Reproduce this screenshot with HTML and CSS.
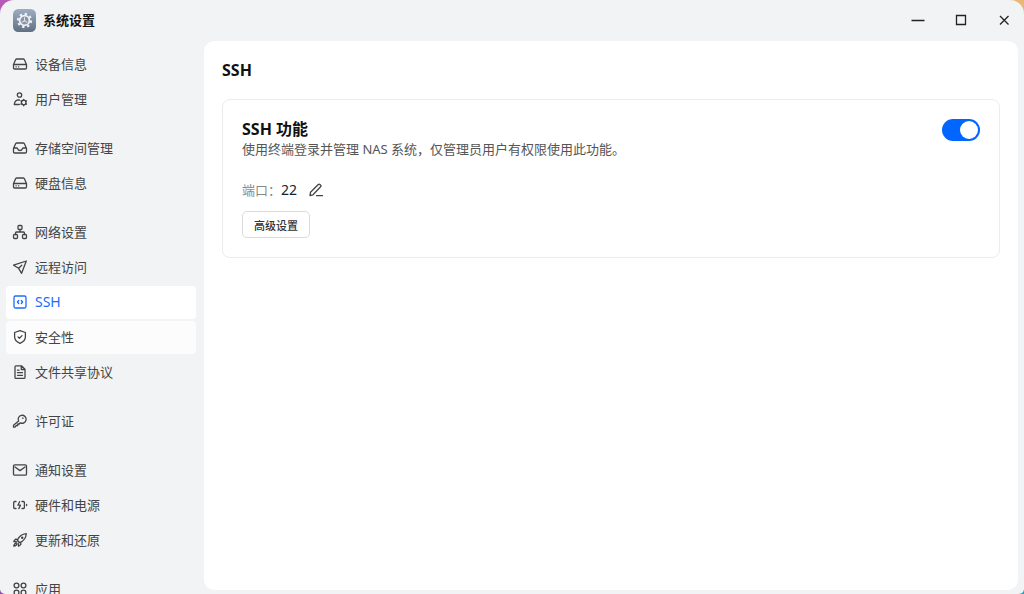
FILE: index.html
```html
<!DOCTYPE html>
<html lang="zh-CN">
<head>
<meta charset="utf-8">
<meta name="viewport" content="width=device-width, initial-scale=1">
<title>系统设置</title>
<link rel="stylesheet" href="styles.css">
</head>
<body>
<div class="window">
  <header class="titlebar">
    <svg class="app-icon" viewBox="0 0 22 22" aria-hidden="true">
      <defs>
        <linearGradient id="app-bg" x1="0" y1="0" x2="0" y2="1">
          <stop offset="0" stop-color="#9dadc3"/>
          <stop offset="1" stop-color="#626f83"/>
        </linearGradient>
      </defs>
      <rect width="22" height="22" rx="5" fill="url(#app-bg)"/>
      <circle cx="11" cy="11" r="6.3" fill="none" stroke="#eef1f5" stroke-width="2" stroke-dasharray="2.3 2.65"/>
      <circle cx="11" cy="11" r="4.7" fill="#8995a7" stroke="#eef1f5" stroke-width="1.700"/>
      <path d="M11 8v3.200l-2.600 1.600M11 11.200l2.600 1.600" fill="none" stroke="#dfe4eb" stroke-width="1"/>
    </svg>
    <h1 class="app-title">系统设置</h1>
    <div class="window-controls">
      <button class="window-button" type="button" aria-label="最小化"><svg viewBox="0 0 14 14"><path d="M.5 7.500h13"/></svg></button>
      <button class="window-button" type="button" aria-label="最大化"><svg viewBox="0 0 14 14"><path d="M2.500 2.500h9v9h-9z"/></svg></button>
      <button class="window-button" type="button" aria-label="关闭"><svg viewBox="0 0 14 14"><path d="M3 3l8.500 8.500M11.500 3L3 11.500"/></svg></button>
    </div>
  </header>

  <div class="body">
    <nav class="sidebar" aria-label="设置">
      <div class="nav-group">
        <a class="nav-item" href="#device"><svg class="icon" viewBox="0 0 16 16"><path d="M1.500 8.500L3.600 3.700Q4 3 4.800 3h6.400q.8 0 1.200.7l2.100 4.800v3.300q0 1.200-1.200 1.200H2.700q-1.200 0-1.200-1.200zM1.500 8.500h13M4 10.800h.3M6.500 10.800h.3"/></svg>设备信息</a>
        <a class="nav-item" href="#users"><svg class="icon" viewBox="0 0 16 16"><circle cx="7.500" cy="4" r="2.200"/><path d="M7.500 9H6q-3.200.3-3.700 4.500h5"/><circle cx="11.700" cy="11.500" r="2.300"/><path d="M11.700 8.300v1M11.700 13.800v1M8.900 9.900l.9.500M13.600 12.600l.9.500M14.500 9.900l-.9.500M9.800 12.600l-.9.500"/></svg>用户管理</a>
      </div>
      <div class="nav-group">
        <a class="nav-item" href="#storage"><svg class="icon" viewBox="0 0 16 16"><path d="M1.500 8.500L3.600 3.700Q4 3 4.800 3h6.400q.8 0 1.200.7l2.100 4.800v3.300q0 1.200-1.200 1.200H2.700q-1.200 0-1.200-1.200zM1.500 8h3.200q.6 0 .9.700Q6.300 10.500 8 10.500t2.400-1.800q.3-.7.900-.7h3.200"/></svg>存储空间管理</a>
        <a class="nav-item" href="#disks"><svg class="icon" viewBox="0 0 16 16"><path d="M1.500 8.500L3.600 3.700Q4 3 4.800 3h6.400q.8 0 1.200.7l2.100 4.800v3.300q0 1.200-1.200 1.200H2.700q-1.200 0-1.200-1.200zM1.500 8.500h13M4 10.800h.3M6.500 10.800h.3"/></svg>硬盘信息</a>
      </div>
      <div class="nav-group">
        <a class="nav-item" href="#network"><svg class="icon" viewBox="0 0 16 16"><rect x="6" y="1.500" width="4" height="4" rx="1"/><rect x="1.500" y="10.500" width="4" height="4" rx="1"/><rect x="10.500" y="10.500" width="4" height="4" rx="1"/><path d="M8 5.500V8M3.500 10.500V9q0-1 1-1h7q1 0 1 1v1.500"/></svg>网络设置</a>
        <a class="nav-item" href="#remote"><svg class="icon" viewBox="0 0 16 16"><path d="M14.300 2L1.600 6.200l5 3.100 3 5zM6.600 9.300l3.200-3.100"/></svg>远程访问</a>
        <a class="nav-item nav-item-active" href="#ssh" aria-current="page"><svg class="icon" viewBox="0 0 16 16"><rect x="2" y="2" width="12" height="12" rx="1.500"/><path d="M6.700 6.500L5.400 8l1.300 1.500M9.300 6.500L10.600 8 9.300 9.500"/></svg>SSH</a>
        <a class="nav-item nav-item-hover" href="#security"><svg class="icon" viewBox="0 0 16 16"><path d="M8 1.600l5.400 1.900v4.200q0 4.200-5.400 6.700-5.400-2.500-5.400-6.700V3.500zM6 7.900l1.400 1.400 2.600-2.700"/></svg>安全性</a>
        <a class="nav-item" href="#sharing"><svg class="icon" viewBox="0 0 16 16"><path d="M9.500 1.800H4q-1 0-1 1v10.600q0 1 1 1h8q1 0 1-1V5.300zM9.300 2v3.500H13M5.500 6.200h1.500M5.500 8.700h5M5.500 11.300h5"/></svg>文件共享协议</a>
      </div>
      <div class="nav-group">
        <a class="nav-item" href="#license"><svg class="icon" viewBox="0 0 16 16"><path d="M6.600 8.100A4 4 0 1 1 8.300 9.800L7.200 11H5.800v1.500H4.300L2.800 14.200H1.500v-2zM10.500 5.200h.6"/></svg>许可证</a>
      </div>
      <div class="nav-group">
        <a class="nav-item" href="#notifications"><svg class="icon" viewBox="0 0 16 16"><rect x="1.500" y="2.800" width="13" height="10.400" rx="1.200"/><path d="M3 5l5 3.600L13 5"/></svg>通知设置</a>
        <a class="nav-item" href="#power"><svg class="icon" viewBox="0 0 16 16"><path d="M4 4.500H2.700q-1 0-1 1v5q0 1 1 1H4M10 4.500h1.400q1 0 1 1v5q0 1-1 1H10M7.600 4.700L5.900 8.200h2.600l-1.700 3.400M14.600 7.500v1"/></svg>硬件和电源</a>
        <a class="nav-item" href="#update"><svg class="icon" viewBox="0 0 16 16"><path d="M5.300 8.200Q8 2.300 14.300 1.700 13.700 8 7.800 10.700zM5.700 7.300L3.500 7.200 1.800 9.500l3 .3M8.700 10.300l.1 2.200-2.300 1.700-.3-3M4.200 11.200q-1.900 0-2.400 3 3-.5 3-2.400"/><circle cx="10.200" cy="5.800" r=".6"/></svg>更新和还原</a>
      </div>
      <div class="nav-group">
        <a class="nav-item" href="#apps"><svg class="icon" viewBox="0 0 16 16"><circle cx="4.500" cy="4.500" r="2.400"/><circle cx="11.500" cy="4.500" r="2.400"/><circle cx="4.500" cy="11.500" r="2.400"/><circle cx="11.500" cy="11.500" r="2.400"/></svg>应用</a>
      </div>
    </nav>

    <main class="panel">
      <h2 class="panel-title">SSH</h2>
      <section class="card">
        <div class="card-head">
          <div class="card-text">
            <h3 class="card-title" id="ssh-label">SSH 功能</h3>
            <p class="card-description">使用终端登录并管理 NAS 系统，仅管理员用户有权限使用此功能。</p>
          </div>
          <input class="switch" type="checkbox" role="switch" aria-labelledby="ssh-label" checked>
        </div>
        <div class="port">
          <span class="port-label">端口：</span>
          <span class="port-value">22</span>
          <button class="edit-button" type="button" aria-label="编辑端口"><svg class="icon" viewBox="0 0 16 16"><path d="M2 13.500l.5-3.200L10.300 2.500q.8-.8 1.600 0l.7.700q.8.800 0 1.600L5 12.800zM8.500 13.700h6"/></svg></button>
        </div>
        <button class="button" type="button">高级设置</button>
      </section>
    </main>
  </div>
</div>
</body>
</html>
```

FILE: styles.css
```css
* {
  box-sizing: border-box;
}

body {
  margin: 0;
  background: linear-gradient(to right, #b65cb8 50%, #e9b777 50%) top / 100% 50% no-repeat,
    linear-gradient(to right, #8a50ac 50%, #2f9db5 50%);
  color: #111;
  font: 13px/20px "Noto Sans", "Noto Sans CJK SC", sans-serif;
}

h1,
h2,
h3,
p {
  margin: 0;
}

button {
  font-family: inherit;
  cursor: pointer;
}

.window {
  display: flex;
  flex-direction: column;
  height: 100vh;
  overflow: hidden;
  border-radius: 14px 14px 5px 5px;
  background: #f1f3f5;
}

.titlebar {
  display: flex;
  flex: none;
  align-items: center;
  gap: 7px;
  height: 41px;
  padding: 0 6px 1px 13px;
}

.app-icon {
  width: 23px;
  height: 23px;
}

.app-title {
  font-size: 13px;
  line-height: 20px;
  font-weight: 700;
}

.window-controls {
  display: flex;
  gap: 15px;
  margin-left: auto;
}

.window-button {
  display: grid;
  place-items: center;
  width: 28px;
  height: 28px;
  padding: 0;
  border: 0;
  background: none;
}

.window-button svg {
  width: 14px;
  height: 14px;
  fill: none;
  stroke: #222;
  stroke-width: 1.3;
}

.body {
  display: flex;
  flex: 1;
  min-height: 0;
}

.sidebar {
  display: flex;
  flex: none;
  flex-direction: column;
  gap: 16px;
  width: 204px;
  padding: 7px 8px 0 6px;
  overflow: hidden;
}

.nav-group {
  display: flex;
  flex-direction: column;
  gap: 2px;
}

.nav-item {
  display: flex;
  align-items: center;
  gap: 7px;
  height: 33px;
  padding: 0 6px 1px;
  border-radius: 4px;
  color: #444;
  text-decoration: none;
}

.nav-item-active {
  background: #fff;
  color: #1a6dff;
  font-size: 14px;
}

.nav-item-hover {
  background: #fcfcfd;
}

.icon {
  flex: none;
  width: 16px;
  height: 16px;
  fill: none;
  stroke: currentColor;
  stroke-width: 1.3;
  stroke-linecap: round;
  stroke-linejoin: round;
}

.panel {
  flex: 1;
  min-width: 0;
  margin: 0 6px 4px 0;
  padding: 18px;
  overflow: auto;
  border-radius: 10px;
  background: #fff;
}

.panel-title {
  margin-bottom: 18px;
  font-size: 16px;
  line-height: 22px;
}

.card {
  padding: 19px;
  border: 1px solid #ebecee;
  border-radius: 8px;
}

.card-head {
  display: flex;
  justify-content: space-between;
  align-items: flex-start;
  gap: 16px;
}

.card-title {
  font-size: 16px;
  line-height: 20px;
}

.card-description {
  color: #555;
}

.switch {
  display: flex;
  flex: none;
  align-items: center;
  width: 38px;
  height: 22px;
  margin: 0;
  padding: 0 2px;
  border-radius: 11px;
  background: #c5c9cf;
  appearance: none;
  cursor: pointer;
}

.switch::before {
  width: 18px;
  height: 18px;
  border-radius: 50%;
  background: #fff;
  content: "";
}

.switch:checked {
  justify-content: flex-end;
  background: #06f;
}

.port {
  display: flex;
  align-items: center;
  margin: 21px 0 11px;
}

.port-label {
  color: #888;
}

.port-value {
  color: #222;
  font-size: 14px;
}

.edit-button {
  display: grid;
  margin-left: 11px;
  padding: 0;
  border: 0;
  background: none;
  color: #444;
}

.button {
  height: 27px;
  padding: 0 11px;
  border: 1px solid #d8dadd;
  border-radius: 5px;
  background: #fff;
  color: #333;
  font-size: 11px;
  font-weight: 500;
}
```
